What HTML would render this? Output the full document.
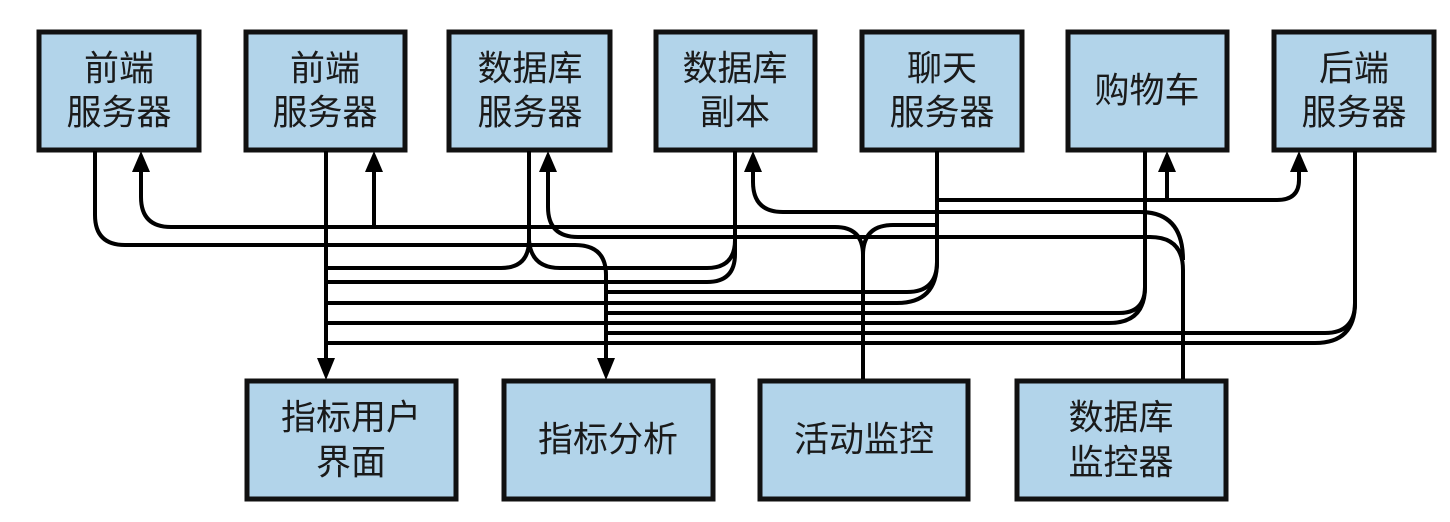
<!DOCTYPE html>
<html><head><meta charset="utf-8"><style>
html,body{margin:0;padding:0;background:#fff;}
svg{display:block}
text{font-family:"Liberation Sans","Noto Sans CJK SC",sans-serif;font-size:35px;fill:#1a1a1a;text-anchor:middle;dominant-baseline:central}
</style></head><body>
<svg width="1450" height="522" viewBox="0 0 1450 522" xmlns="http://www.w3.org/2000/svg">
<g fill="#b2d4ea" stroke="#111" stroke-width="5">
<rect x="39" y="32" width="160" height="118"/>
<rect x="246" y="32" width="159" height="118"/>
<rect x="449" y="32" width="161" height="118"/>
<rect x="656" y="32" width="159" height="118"/>
<rect x="862" y="32" width="160" height="118"/>
<rect x="1068" y="32" width="159" height="118"/>
<rect x="1274" y="32" width="160" height="118"/>
<rect x="247" y="381" width="209" height="118"/>
<rect x="504" y="381" width="209" height="118"/>
<rect x="760" y="381" width="208" height="118"/>
<rect x="1017" y="381" width="209" height="118"/>
</g>
<g fill="none" stroke="#000" stroke-width="4">
<path d="M95,151 V215 Q95,245 125,245 H575 Q606,245 606,275 V362"/>
<path d="M326,151 V362"/>
<path d="M863,379 V255 Q863,227 835,227 H171 Q141,227 141,197 V168"/>
<path d="M374,227 V168"/>
<path d="M863,255 Q863,225 893,225 H937"/>
<path d="M937,151 V262 Q937,292 907,292 H606"/>
<path d="M937,262 Q937,303 897,303 H326"/>
<path d="M937,200 H1277 Q1299,200 1299,180 V168"/>
<path d="M1167,200 V168"/>
<path d="M529,151 V240 Q529,268 501,268 H326"/>
<path d="M529,240 Q531,268 560,268 H707 Q735,268 735,240"/>
<path d="M735,151 V254 Q735,282 707,282 H326"/>
<path d="M1183,379 V270 Q1183,237 1150,237 H578 Q548,237 548,207 V168"/>
<path d="M1183,260 Q1183,212 1140,212 H783 Q753,212 753,182 V168"/>
<path d="M1145,151 V287 Q1145,313 1119,313 H606"/>
<path d="M1145,287 Q1145,323 1109,323 H326"/>
<path d="M1355,151 V303 Q1355,333 1325,333 H606"/>
<path d="M1355,303 Q1355,343 1315,343 H326"/>
</g>
<g fill="#000">
<polygon points="141,151 132,172 150,172"/>
<polygon points="374,151 365,172 383,172"/>
<polygon points="548,151 539,172 557,172"/>
<polygon points="753,151 744,172 762,172"/>
<polygon points="1167,151 1158,172 1176,172"/>
<polygon points="1299,151 1290,172 1308,172"/>
<polygon points="326,380 317,358 335,358"/>
<polygon points="606,380 597,358 615,358"/>
</g>
<text x="119" y="69">前端</text><text x="119" y="113">服务器</text>
<text x="325" y="69">前端</text><text x="325" y="113">服务器</text>
<text x="530" y="69">数据库</text><text x="530" y="113">服务器</text>
<text x="735" y="69">数据库</text><text x="735" y="113">副本</text>
<text x="942" y="69">聊天</text><text x="942" y="113">服务器</text>
<text x="1147" y="91">购物车</text>
<text x="1354" y="69">后端</text><text x="1354" y="113">服务器</text>
<text x="351" y="418">指标用户</text><text x="351" y="463">界面</text>
<text x="608" y="440">指标分析</text>
<text x="864" y="440">活动监控</text>
<text x="1121" y="418">数据库</text><text x="1121" y="463">监控器</text>
</svg>
</body></html>
